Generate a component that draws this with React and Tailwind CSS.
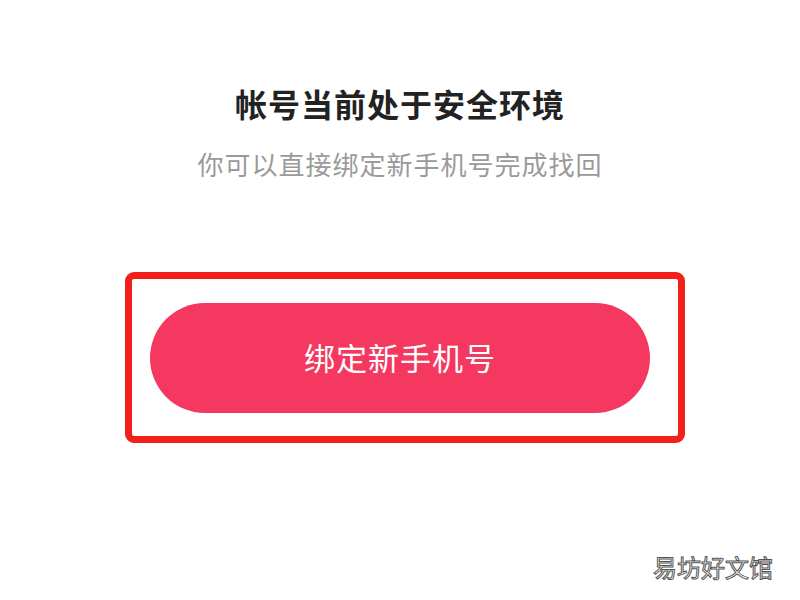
import React from "react";

const App = () => {
  return (
    <div className="relative w-[800px] h-[600px] bg-white overflow-hidden font-['Noto_Sans_CJK_SC',sans-serif] flex flex-col items-center">
      {/* heading */}
      <h1 className="mt-[87px] text-[32px] leading-[32px] font-bold text-[#222] tracking-[1px]">
        帐号当前处于安全环境
      </h1>
      <p className="mt-[31px] text-[26px] leading-[28px] text-[#9a9a9a] tracking-[1px]">
        你可以直接绑定新手机号完成找回
      </p>

      {/* highlighted button */}
      <div className="mt-[94px] ml-[10px] w-[560px] h-[171px] border-[7px] border-[#f2201a] rounded-[9px] flex items-center pl-[18px]">
        <button className="w-[500px] h-[110px] rounded-full bg-[#f5385f] text-white text-[31px] tracking-[1px] flex items-center justify-center">
          绑定新手机号
        </button>
      </div>

      {/* watermark */}
      <div className="absolute left-[653px] top-[553px] text-[24px] leading-[28px] text-white [-webkit-text-stroke:1px_#555]">
        易坊好文馆
      </div>
    </div>
  );
};

export default App;
